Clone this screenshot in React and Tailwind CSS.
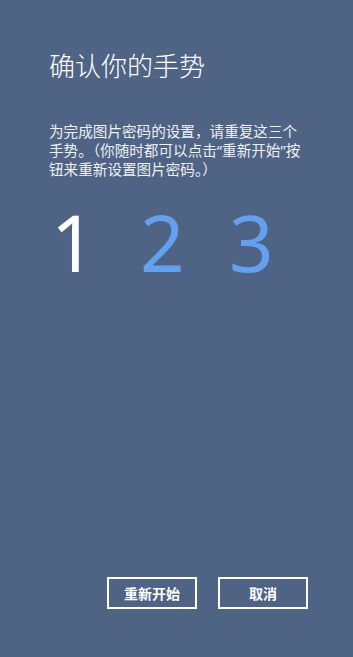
import React from 'react';

const App = () => {
  return (
    <div
      className="w-[353px] h-[657px] bg-[#4f6385] text-white flex flex-col overflow-hidden"
      style={{ fontFamily: '"Noto Sans", "Noto Sans CJK SC", sans-serif' }}
    >
      <div className="pl-[49px] pr-[40px] pt-[47px]">
        <h1 className="text-[26px] leading-[38px] font-light">确认你的手势</h1>
        <p className="mt-[37px] w-[256px] text-[14.6px] leading-[19px] text-[#eef1f6]">
          为完成图片密码的设置，请重复这三个手势。（你随时都可以点击“重新开始”按钮来重新设置图片密码。）
        </p>
        <div className="mt-[23px] flex items-center text-[78px] leading-[80px]">
          <span className="w-[88px] pl-[2px] text-white">1</span>
          <span className="w-[88px] pl-[3px] text-[#64a0f0]">2</span>
          <span className="pl-[4px] text-[#64a0f0]">3</span>
        </div>
      </div>
      <div className="flex-1" />
      <div className="flex justify-end gap-[21px] pr-[45px] pb-[48px]">
        <button className="w-[90px] h-[32px] border-2 border-white text-[14px] font-bold">重新开始</button>
        <button className="w-[90px] h-[32px] border-2 border-white text-[14px] font-bold">取消</button>
      </div>
    </div>
  );
};

export default App;
